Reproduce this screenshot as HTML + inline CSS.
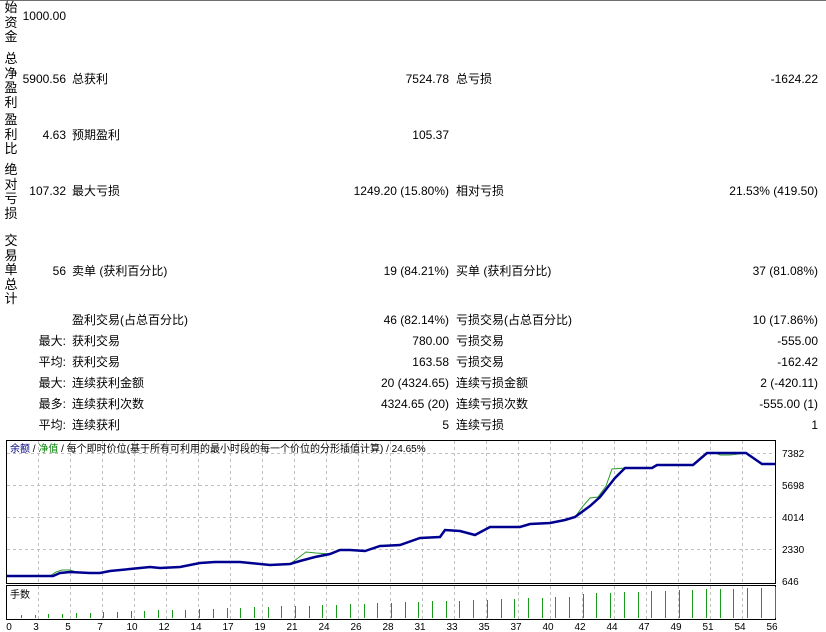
<!DOCTYPE html>
<html><head><meta charset="utf-8"><style>
html,body{margin:0;padding:0;background:#fff;}
body{width:826px;height:631px;position:relative;overflow:hidden;font-family:"Liberation Sans","Noto Sans CJK SC",sans-serif;font-size:12px;color:#000;border-top:1px solid #6f6f6f;box-sizing:border-box;}
.a{position:absolute;white-space:nowrap;line-height:14px;}
.r{text-align:right;}
.v{position:absolute;left:3px;width:16px;text-align:center;line-height:14.5px;font-size:13px;}
</style></head><body>
<div class="v" style="top:0px">始<br>资<br>金</div>
<div class="v" style="top:51px">总<br>净<br>盈<br>利</div>
<div class="v" style="top:112px">盈<br>利<br>比</div>
<div class="v" style="top:162px">绝<br>对<br>亏<br>损</div>
<div class="v" style="top:233px">交<br>易<br>单<br>总<br>计</div>

<div class="a r" style="right:760px;top:8px">1000.00</div>

<div class="a r" style="right:760px;top:71px">5900.56</div>
<div class="a" style="left:72px;top:71px">总获利</div>
<div class="a r" style="right:377px;top:71px">7524.78</div>
<div class="a" style="left:456px;top:71px">总亏损</div>
<div class="a r" style="right:8px;top:71px">-1624.22</div>

<div class="a r" style="right:760px;top:127px">4.63</div>
<div class="a" style="left:72px;top:127px">预期盈利</div>
<div class="a r" style="right:377px;top:127px">105.37</div>

<div class="a r" style="right:760px;top:183px">107.32</div>
<div class="a" style="left:72px;top:183px">最大亏损</div>
<div class="a r" style="right:377px;top:183px">1249.20 (15.80%)</div>
<div class="a" style="left:456px;top:183px">相对亏损</div>
<div class="a r" style="right:8px;top:183px">21.53% (419.50)</div>

<div class="a r" style="right:760px;top:263px">56</div>
<div class="a" style="left:72px;top:263px">卖单 (获利百分比)</div>
<div class="a r" style="right:377px;top:263px">19 (84.21%)</div>
<div class="a" style="left:456px;top:263px">买单 (获利百分比)</div>
<div class="a r" style="right:8px;top:263px">37 (81.08%)</div>

<div class="a" style="left:72px;top:312px">盈利交易(占总百分比)</div>
<div class="a r" style="right:377px;top:312px">46 (82.14%)</div>
<div class="a" style="left:456px;top:312px">亏损交易(占总百分比)</div>
<div class="a r" style="right:8px;top:312px">10 (17.86%)</div>

<div class="a r" style="right:760px;top:333px">最大:</div>
<div class="a" style="left:72px;top:333px">获利交易</div>
<div class="a r" style="right:377px;top:333px">780.00</div>
<div class="a" style="left:456px;top:333px">亏损交易</div>
<div class="a r" style="right:8px;top:333px">-555.00</div>

<div class="a r" style="right:760px;top:354px">平均:</div>
<div class="a" style="left:72px;top:354px">获利交易</div>
<div class="a r" style="right:377px;top:354px">163.58</div>
<div class="a" style="left:456px;top:354px">亏损交易</div>
<div class="a r" style="right:8px;top:354px">-162.42</div>

<div class="a r" style="right:760px;top:375px">最大:</div>
<div class="a" style="left:72px;top:375px">连续获利金额</div>
<div class="a r" style="right:377px;top:375px">20 (4324.65)</div>
<div class="a" style="left:456px;top:375px">连续亏损金额</div>
<div class="a r" style="right:8px;top:375px">2 (-420.11)</div>

<div class="a r" style="right:760px;top:396px">最多:</div>
<div class="a" style="left:72px;top:396px">连续获利次数</div>
<div class="a r" style="right:377px;top:396px">4324.65 (20)</div>
<div class="a" style="left:456px;top:396px">连续亏损次数</div>
<div class="a r" style="right:8px;top:396px">-555.00 (1)</div>

<div class="a r" style="right:760px;top:417px">平均:</div>
<div class="a" style="left:72px;top:417px">连续获利</div>
<div class="a r" style="right:377px;top:417px">5</div>
<div class="a" style="left:456px;top:417px">连续亏损</div>
<div class="a r" style="right:8px;top:417px">1</div>

<svg style="position:absolute;left:0;top:0" width="826" height="631" font-family="Liberation Sans, Noto Sans CJK SC, sans-serif">
<g stroke="#c0c0c0" stroke-dasharray="3,3" stroke-width="1">
<path d="M7 452.5H775M7 484.5H775M7 516.5H775M7 548.5H775"/>
<path d="M38.5 440V582M70.5 440V582M102.5 440V582M134.5 440V582M166.5 440V582M198.5 440V582M230.5 440V582M262.5 440V582M294.5 440V582M326.5 440V582M358.5 440V582M390.5 440V582M422.5 440V582M454.5 440V582M486.5 440V582M518.5 440V582M550.5 440V582M582.5 440V582M614.5 440V582M646.5 440V582M678.5 440V582M710.5 440V582M742.5 440V582"/>
<path d="M38.5 585V618M70.5 585V618M102.5 585V618M134.5 585V618M166.5 585V618M198.5 585V618M230.5 585V618M262.5 585V618M294.5 585V618M326.5 585V618M358.5 585V618M390.5 585V618M422.5 585V618M454.5 585V618M486.5 585V618M518.5 585V618M550.5 585V618M582.5 585V618M614.5 585V618M646.5 585V618M678.5 585V618M710.5 585V618M742.5 585V618"/>
</g>
<rect x="6.5" y="439.5" width="769" height="143" fill="none" stroke="#000"/>
<rect x="6.5" y="584.5" width="769" height="34" fill="none" stroke="#000"/>
<text x="10" y="451" font-size="10" fill="#000">
<tspan fill="#000080">余额</tspan> / <tspan fill="#008000">净值</tspan> / 每个即时价位(基于所有可利用的最小时段的每一个价位的分形插值计算) / 24.65%</text>
<polyline fill="none" stroke="#2a9a2a" stroke-width="1" points="50,575 56,571 62,569 70,569 76,571 90,572 100,572 110,570 130,568 150,566 160,567 180,566 200,562 215,561 240,561 250,562 270,564 290,563 298,557 306,551 316,552 330,553 340,549 350,549 365,550 380,545 400,544 420,537 440,536 445,529 460,530 475,534 490,526 520,526 530,523 550,522 565,519 575,516 583,505 590,497 598,496 606,485 612,468 625,467 652,467 657,464 693,464 707,452 716,452 720,454 730,454 746,452 762,463 775,463"/>
<polyline fill="none" stroke="#000090" stroke-width="2.5" points="7,575 53,575 60,572 70,571 90,572 100,572 110,570 130,568 150,566 160,567 180,566 200,562 215,561 240,561 250,562 270,564 290,563 300,560 315,556 330,553 340,549 350,549 365,550 380,545 400,544 420,537 440,536 445,529 460,530 475,534 490,526 520,526 530,523 550,522 565,519 575,516 590,505 600,496 615,477 625,467 652,467 657,464 693,464 707,452 746,452 762,463 775,463"/>
<text x="10" y="597" font-size="10">手数</text>
<g id="bars" fill="#1a9a1a"></g>
<g font-size="10" fill="#000">
<text x="782" y="456">7382</text><text x="782" y="488">5698</text><text x="782" y="520">4014</text><text x="782" y="552">2330</text><text x="782" y="584">646</text>
</g>
<g font-size="10" fill="#000" text-anchor="middle" id="xl"></g>
</svg>
<script>
var b=document.getElementById('bars'),s='';
for(var i=0;i<56;i++){var x=Math.round(21+i*13.7);var h=Math.round(3+i*0.45+(i>40?3:0));s+='<rect x="'+x+'" y="'+(617-h)+'" width="1" height="'+h+'"/>';}
b.innerHTML=s;
var L=[0,3,5,7,10,12,14,17,19,21,24,26,28,31,33,35,37,40,42,44,47,49,51,54,56],t='';
for(var k=0;k<L.length;k++){var cx=k==0?9:36+32*(k-1);t+='<text x="'+cx+'" y="629">'+L[k]+'</text>';}
document.getElementById('xl').innerHTML=t;
</script>
</body></html>
